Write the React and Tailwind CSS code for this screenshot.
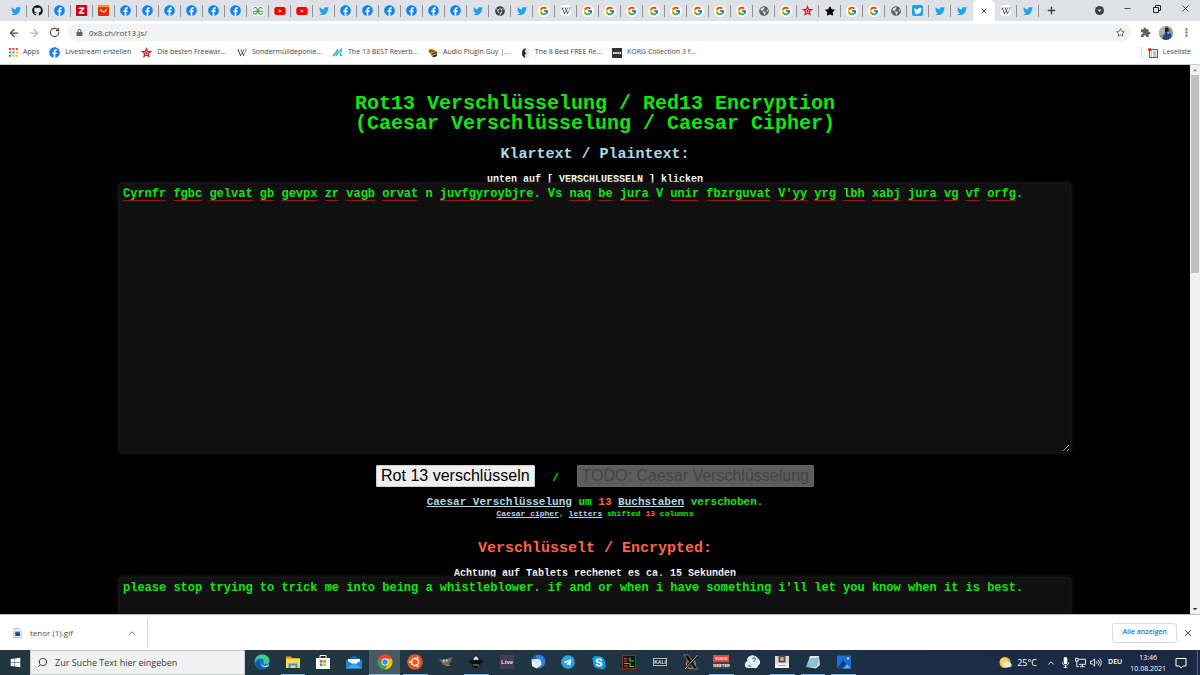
import React, { useState } from "react";
import {
  FaTwitter,
  FaFacebook,
  FaGithub,
  FaYoutube,
  FaWikipediaW,
  FaGlobeAmericas,
  FaStar,
  FaRegStar,
  FaChrome,
  FaLock,
  FaSkype,
  FaTelegram,
  FaUbuntu,
  FaWindows,
} from "react-icons/fa";
import { MdExtension } from "react-icons/md";
import { FcGoogle } from "react-icons/fc";
import {
  ArrowLeft,
  ArrowRight,
  RotateCw,
  X,
  Plus,
  Minus,
  ChevronUp,
  Search,
  MoreVertical,
} from "lucide-react";

/* ---------- tab icons ---------- */

const Twitter = () => <FaTwitter className="size-[10px] text-[#1da1f2]" />;
const Facebook = () => (
  <span className="flex size-[11px] items-center justify-center rounded-full bg-[radial-gradient(#fff_55%,transparent_56%)]">
    <FaFacebook className="size-[11px] text-[#1380f5]" />
  </span>
);
const Google = () => (
  <span className="flex size-[12px] items-center justify-center rounded-full bg-white">
    <FcGoogle className="size-[10px]" />
  </span>
);
const Youtube = () => <FaYoutube className="size-[12px] text-[#f00]" />;
const Globe = () => <FaGlobeAmericas className="size-[10px] text-[#5f6368]" />;
const Wiki = () => (
  <span className="flex size-[11px] items-center justify-center rounded-sm bg-white">
    <FaWikipediaW className="size-[10px] text-[#222]" />
  </span>
);
const Github = () => <FaGithub className="size-[11px] text-[#111]" />;
const ChromeDark = () => <FaChrome className="size-[10px] text-[#3c4043]" />;
const StarBlack = () => <FaStar className="size-[10px] text-black" />;

function Geeks() {
  return (
    <svg viewBox="0 0 14 12" className="h-[10px] w-[12px]" fill="none" stroke="#3f9b4f" strokeWidth="1.3">
      <rect width="14" height="12" rx="2" fill="#f4f7f4" stroke="none" />
      <path d="M1.500 3.300C3 .5 6.200 2 6.200 4.500V7.500C6.200 10.500 1.500 11 1.500 7.800M1 6.200h12M12.500 3.300C11 .5 7.800 2 7.800 4.500V7.500c0 3 4.700 3.500 4.700.3" />
    </svg>
  );
}
function ZIcon() {
  return (
    <svg viewBox="0 0 12 12" className="size-[11px]">
      <rect width="12" height="12" fill="#d0021b" />
      <path d="M3 2.600h6v1.600L5.200 7.800H9v1.700H3V7.900l3.800-3.600H3z" fill="#fff" />
    </svg>
  );
}
function AliIcon() {
  return (
    <svg viewBox="0 0 12 12" className="size-[11px]">
      <rect width="12" height="12" rx="1.500" fill="#e62e04" />
      <path d="M0 1.500A1.500 1.500 0 0 1 1.500 0h9A1.500 1.500 0 0 1 12 1.500V2.500H0z" fill="#f7971d" />
      <path d="M3 4.600c.3 3.600 5.700 3.600 6 0" fill="none" stroke="#fff" strokeWidth="1.100" strokeLinecap="round" />
    </svg>
  );
}
function StarRed() {
  return (
    <svg viewBox="0 0 24 24" className="size-[11px]">
      <path
        d="M12 3.500l2.500 6 6.500.500-5 4.300 1.600 6.300L12 17.200l-5.600 3.400 1.600-6.300L3 10l6.500-.5z"
        fill="#f3c4c7"
        stroke="#c8202f"
        strokeWidth="2.600"
      />
      <circle cx="12" cy="13" r="2" fill="#c8202f" />
    </svg>
  );
}
function TwitterBox() {
  return (
    <span className="flex size-[11px] items-center justify-center rounded-[2px] bg-[#1da1f2]">
      <FaTwitter className="size-[8px] text-white" />
    </span>
  );
}

const f = ["Facebook", Facebook];
const t = ["Twitter", Twitter];
const g = ["Google", Google];
const y = ["YouTube", Youtube];
const w = ["Wikipedia", Wiki];
const o = ["Website", Globe];
const tabs = [
  t, ["GitHub", Github], f, ["Zeitung", ZIcon], ["AliExpress", AliIcon],
  f, f, f, f, f, f, ["GeeksforGeeks", Geeks], y, y, t,
  f, f, f, f, f, f, t, ["Chrome", ChromeDark], t, g, w,
  g, g, g, g, g, g, g, g, o, g,
  ["Freeware", StarRed], ["Favorit", StarBlack], g, g, o,
  ["Tweet", TwitterBox], t, t, ["Rot13", null], w, t,
];

function TabStrip() {
  return (
    <header className="flex h-[21px] shrink-0 items-stretch bg-[#dee1e6] pl-[5px] text-[#3c4043]">
      <nav className="flex" aria-label="Tabs">
        {tabs.map(([name, Icon], i) =>
          Icon ? (
            <button key={i} aria-label={name} className="flex w-[22px] items-center">
              <span className="flex flex-1 justify-center">
                <Icon />
              </span>
              <span className={i === 43 ? "h-3 w-px" : "h-3 w-px bg-[#8e9196]"} />
            </button>
          ) : (
            <button
              key={i}
              aria-label="Tab schließen"
              className="flex w-[22px] items-center justify-center rounded-t-[5px] bg-white"
            >
              <X className="size-[8px]" strokeWidth={3} />
            </button>
          )
        )}
      </nav>
      <button aria-label="Neuer Tab" className="ml-[6px] flex w-3 items-center justify-center">
        <Plus className="size-[11px]" strokeWidth={3} />
      </button>
      <div className="ml-auto flex">
        <button aria-label="Tabs suchen" className="flex w-[27px] items-center justify-center">
          <svg viewBox="0 0 10 10" className="size-[9px]">
            <circle cx="5" cy="5" r="5" fill="#3c4043" />
            <path d="M2.800 4h4.400L5 6.800z" fill="#dee1e6" />
          </svg>
        </button>
        <button aria-label="Minimieren" className="flex w-[29px] items-center justify-center pb-1">
          <Minus className="size-[9px]" strokeWidth={2.500} />
        </button>
        <button aria-label="Verkleinern" className="flex w-[29px] items-center justify-center pb-1">
          <svg viewBox="0 0 8 8" className="size-[8px]" fill="none" stroke="#222">
            <path d="M.5 2.500h5v5h-5zM2.500 2.500v-2h5v5h-2" />
          </svg>
        </button>
        <button aria-label="Schließen" className="flex w-[29px] items-center justify-center pb-1">
          <X className="size-[11px]" />
        </button>
      </div>
    </header>
  );
}

function Toolbar() {
  return (
    <div className="flex h-[23px] shrink-0 items-center bg-white pr-2 pl-2 text-[#5f6368]">
      <button aria-label="Zurück" className="flex w-3 justify-center text-[#4a4d51]">
        <ArrowLeft className="size-[12px]" strokeWidth={2.500} />
      </button>
      <button aria-label="Vorwärts" className="ml-2 flex w-3 justify-center text-[#b4b7ba]">
        <ArrowRight className="size-[12px]" strokeWidth={2.500} />
      </button>
      <button aria-label="Neu laden" className="ml-2 flex w-3 justify-center text-[#4a4d51]">
        <RotateCw className="size-[11px]" strokeWidth={2.500} />
      </button>
      <div className="ml-2 flex h-[17px] flex-1 items-center rounded-full bg-[#f1f3f4] pr-1.5 pl-2">
        <FaLock className="size-[7px]" />
        <input
          aria-label="Adresse"
          defaultValue="0x8.ch/rot13.js/"
          className="ml-1.5 min-w-0 flex-1 bg-transparent font-['Open_Sans',sans-serif] text-[8px] text-[#4a4d51] outline-none"
        />
        <button aria-label="Lesezeichen">
          <FaRegStar className="size-[9px]" />
        </button>
      </div>
      <button aria-label="Erweiterungen" className="ml-[9px]">
        <MdExtension className="size-[11px]" />
      </button>
      <button aria-label="Profil" className="ml-[8px]">
        <svg viewBox="0 0 14 14" className="size-[14px]">
          <defs>
            <clipPath id="avatar">
              <circle cx="7" cy="7" r="7" />
            </clipPath>
          </defs>
          <g clipPath="url(#avatar)">
            <rect width="14" height="14" fill="#8b8d92" />
            <rect width="6" height="9" fill="#b5b2ad" />
            <path d="M3 14l2-6 3-2 4 2 1 6z" fill="#24468f" />
            <path d="M6 2l3-.5L10 5 8 8 6 6z" fill="#1c202c" />
            <path d="M8 7l1-2 1 3z" fill="#d6d9df" />
          </g>
        </svg>
      </button>
      <button aria-label="Menü" className="ml-[8px]">
        <MoreVertical className="size-[11px]" strokeWidth={3} />
      </button>
    </div>
  );
}

/* ---------- bookmarks ---------- */

function AppsIcon() {
  const c = ["#ea4335", "#ea4335", "#ea4335", "#34a853", "#4285f4", "#fbbc05", "#34a853", "#fbbc05", "#fbbc05"];
  return (
    <svg viewBox="0 0 9 9" className="size-[9px]">
      {c.map((fill, i) => (
        <rect key={i} x={(i % 3) * 3.4} y={Math.floor(i / 3) * 3.4} width="2" height="2" fill={fill} />
      ))}
    </svg>
  );
}
function ReverbIcon() {
  return (
    <svg viewBox="0 0 12 10" className="h-[9px] w-[11px]" fill="none" stroke="#28b5b5" strokeWidth="1.200">
      <path d="M.5 9C2 9 4 5 6.500 1L5 8c1.500-1 3-5 5.500-7L9 8.500l2.500-.8" />
      <path d="M1 7.500h3" strokeWidth="1.500" />
    </svg>
  );
}
function BeeIcon() {
  return (
    <svg viewBox="0 0 12 12" className="size-[10px]">
      <ellipse cx="4" cy="4" rx="3.500" ry="3" fill="#d98e12" />
      <ellipse cx="7.500" cy="7" rx="3.500" ry="4" fill="#3b2411" />
      <path d="M4 6l6-2M4.500 9l6-2" stroke="#f2b51d" strokeWidth="1.300" />
      <circle cx="3" cy="3.500" r="1" fill="#3b1608" />
    </svg>
  );
}
function MoonIcon() {
  return (
    <svg viewBox="0 0 12 12" className="size-[10px]">
      <rect x="6" y="1" width="5" height="10" fill="#e1e5e8" />
      <path d="M6 1C2 2 1.500 10 6 11.500 4.500 9 5 7.500 7 6.500 5 5 5 3 6.500 1z" fill="#222" stroke="#222" />
    </svg>
  );
}
function KorgIcon() {
  return (
    <svg viewBox="0 0 10 10" className="size-[10px]">
      <rect width="10" height="10" fill="#2d3337" />
      <path d="M1 4h1.500v2H1zM3.200 4h1.500v2H3.200zM5.400 4h1.500v2H5.400zM7.600 4H9v2H7.600z" fill="#fff" />
    </svg>
  );
}
const bookmarks = [
  ["Apps", AppsIcon],
  ["Livestream erstellen", Facebook],
  ["Die besten Freewar...", StarRed],
  ["Sondermülldeponie...", Wiki],
  ["The 13 BEST Reverb...", ReverbIcon],
  ["Audio Plugin Guy |...", BeeIcon],
  ["The 8 Best FREE Re...", MoonIcon],
  ["KORG Collection 3 f...", KorgIcon],
];

function Bookmarks() {
  return (
    <nav className="flex h-[21px] shrink-0 items-center gap-[10px] border-b border-[#c9cbce] bg-white pr-[9px] pb-[3px] pl-[9px] font-['Open_Sans',sans-serif] text-[7px] text-[#44474b]">
      {bookmarks.map(([label, Icon]) => (
        <a key={label} href="#" className="flex items-center gap-[5px] whitespace-nowrap">
          <Icon />
          {label}
        </a>
      ))}
      <a href="#" className="ml-auto flex items-center gap-[5px] border-l border-[#d5d7da] pl-[6px]">
        <svg viewBox="0 0 10 10" className="size-[10px]">
          <rect x="1.500" y="1.500" width="8" height="8" fill="none" stroke="#5f6368" />
          <path d="M3 4h1M5 4h3.500M3 6h1M5 6h3.500M3 8h1M5 8h3.500" stroke="#5f6368" strokeWidth=".8" />
          <circle cx="1.800" cy="1.800" r="1.800" fill="#d93025" />
        </svg>
        Leseliste
      </a>
    </nav>
  );
}

/* ---------- web page ---------- */

const cipher =
  "Cyrnfr fgbc gelvat gb gevpx zr vagb orvat n juvfgyroybjre. Vs naq be jura V unir fbzrguvat V'yy yrg lbh xabj jura vg vf orfg.";
const plain =
  "please stop trying to trick me into being a whistleblower. if and or when i have something i'll let you know when it is best.";

const rot13 = (s) =>
  s.replace(/[a-z]/gi, (c) => {
    const base = c <= "Z" ? 65 : 97;
    return String.fromCharCode(((c.charCodeAt(0) - base + 13) % 26) + base);
  });

/* Red spelling marks, one under each word longer than a letter. */
function SpellingMarks({ text }) {
  return (
    <div
      aria-hidden="true"
      className="pointer-events-none absolute inset-x-0 top-0 flex flex-wrap px-[4px] pt-[4px] text-[12px]"
    >
      {text.split(" ").map((word, i) => {
        const n = word.replace(/\.$/, "").length;
        const skip = n === 1 || word === "Vs";
        return (
          <span key={i} className="flex h-[14px]" style={{ width: `${word.length + 1}ch` }}>
            <span
              className={skip ? "" : "border-b border-[#9a1212]"}
              style={{ width: `${n}ch` }}
            />
          </span>
        );
      })}
    </div>
  );
}

const area =
  "block h-[270px] w-full resize-y rounded-[2px] border border-[#161616] bg-[#101010] px-[3px] pt-[3px] text-[12px] leading-[14px] font-bold text-[#0ee60e] shadow-[0_0_4px_#222] outline-none";

function Page() {
  const [input, setInput] = useState(cipher);
  const [output, setOutput] = useState(plain);
  return (
    <main className="min-h-0 flex-1 overflow-hidden bg-black pt-[29px] text-center font-['Liberation_Mono',monospace] font-bold text-[#0ee60e]">
      <h1 className="text-[20px] leading-[20px]">
        Rot13 Verschlüsselung / Red13 Encryption
        <br />
        (Caesar Verschlüsselung / Caesar Cipher)
      </h1>
      <h2 className="mt-[11px] text-[15px] leading-[20px] text-[#add8e6]">
        <label htmlFor="input">Klartext / Plaintext:</label>
      </h2>
      <p className="mt-[9px] h-[9px] text-[10px] leading-[12px] text-white">
        unten auf [ VERSCHLUESSELN ] klicken
      </p>
      <div className="relative mx-auto w-4/5">
        <textarea
          id="input"
          spellCheck={false}
          value={input}
          onChange={(e) => setInput(e.target.value)}
          className={area}
        />
        <SpellingMarks text={input} />
      </div>
      <div className="mt-[12px] flex items-center justify-center font-['Liberation_Sans',sans-serif] text-[16px] leading-[20px] font-normal">
        <button
          onClick={() => setOutput(rot13(input))}
          className="rounded-[1px] border border-[#d0d0d0] bg-[#efefef] px-[4px] text-black"
        >
          Rot 13 verschlüsseln
        </button>
        <span className="w-[42px] pt-1 font-['Liberation_Mono',monospace] text-[11px] leading-[16px] font-bold">
          /
        </span>
        <button disabled className="rounded-[1px] border border-[#666] bg-[#5d5d5d] px-[4px] text-[#444]">
          TODO: Caesar Verschlüsselung
        </button>
      </div>
      <p className="mt-[8px] text-[11px] leading-[14px]">
        <a href="#" className="text-[#add8e6] underline">Caesar Verschlüsselung</a> um{" "}
        <span className="text-[#ff6347]">13</span>{" "}
        <a href="#" className="text-[#add8e6] underline">Buchstaben</a> verschoben.
      </p>
      <p className="text-[8px] leading-[10px]">
        <a href="#" className="text-[#add8e6] underline">Caesar cipher</a>,{" "}
        <a href="#" className="text-[#add8e6] underline">letters</a> shifted{" "}
        <span className="text-[#ff6347]">13</span> columns
      </p>
      <h2 className="mt-[20px] text-[15px] leading-[20px] text-[#ff6347]">
        <label htmlFor="output">Verschlüsselt / Encrypted:</label>
      </h2>
      <p className="mt-[9px] h-[9px] text-[10px] leading-[12px] text-white">
        Achtung auf Tablets rechenet es ca. 15 Sekunden
      </p>
      <div className="relative mx-auto w-4/5">
        <textarea
          id="output"
          spellCheck={false}
          value={output}
          onChange={(e) => setOutput(e.target.value)}
          className={area}
        />
      </div>
    </main>
  );
}

function ScrollBar() {
  return (
    <div className="flex w-[10px] flex-col items-center bg-[#f1f1f1]">
      <svg viewBox="0 0 10 10" className="size-[10px]">
        <path d="M2.800 6.200h4.400L5 4z" fill="#8b8b8b" />
      </svg>
      <div className="h-[198px] w-[8px] bg-[#c1c1c1]" />
      <svg viewBox="0 0 10 10" className="mt-auto size-[10px]">
        <path d="M2.800 4h4.400L5 6.200z" fill="#333" />
      </svg>
    </div>
  );
}

/* ---------- download shelf ---------- */

function Downloads() {
  return (
    <div className="flex h-[36px] shrink-0 items-center border-t border-[#b8babd] bg-white pr-[7px] font-['Open_Sans',sans-serif] text-[8px] text-[#4a4d51]">
      <div className="flex h-[28px] w-[148px] items-center border-r border-[#d5d7da] pr-[10px] pl-[13px]">
        <svg viewBox="0 0 9 11" className="h-[10px] w-[9px]">
          <path d="M.5.5H6L8.500 3v7.500h-8z" fill="#eaf2fa" stroke="#9aa9b8" strokeWidth=".8" />
          <rect x="2" y="4" width="5" height="4.500" fill="#1f5fa8" />
          <path d="M2 8.500l2-2.500 1.500 1 1.500-1.500v3z" fill="#12355f" />
        </svg>
        <span className="ml-2">tenor (1).gif</span>
        <button aria-label="Download-Menü" className="ml-auto">
          <ChevronUp className="size-[10px]" />
        </button>
      </div>
      <button className="ml-auto h-5 rounded-[3px] border border-[#dadce0] px-[9px] text-[7px] font-semibold text-[#2f6fe0]">
        Alle anzeigen
      </button>
      <button aria-label="Leiste schließen" className="ml-[6px]">
        <X className="size-[10px]" strokeWidth={2.5} />
      </button>
    </div>
  );
}

/* ---------- taskbar ---------- */

const I = ({ children }) => (
  <svg viewBox="0 0 16 16" className="size-[16px]">
    {children}
  </svg>
);

const apps = [
  ["Edge", false, () => (
    <I>
      <circle cx="8" cy="8" r="7.500" fill="#1578c8" />
      <path d="M.6 8C1 3.500 4.200.5 8 .5c4.500 0 7.500 3 7.500 6 0 2.500-2 3.500-4 3.500-1.500 0-2.300-.7-1.800-1.400C10.800 6.500 9 4.500 6.500 4.500 3.500 4.500 1.500 6 .6 8z" fill="#3ecf8e" />
      <path d="M.6 8C1 4.500 3.500 2 7 2c-3 1.500-3 4-6.400 6z" fill="#35b6dd" />
      <path d="M5.500 8.500c-.5 3 2 5.500 5.500 5.300-4 2.500-9 .5-9-4 0-2.500 2.500-4.500 5.200-4.300C6 6 5.600 7.300 5.500 8.500z" fill="#0c59a4" />
      <path d="M6.500 8.500c0 2.500 3 4.200 7 2.800l1.500-1.300-.5 2.200c-4 2-8 .3-8-3.700z" fill="#bfe6f7" />
    </I>
  )],
  ["Explorer", true, () => (
    <I>
      <path d="M1 2.500h5l1.500 1.500H15v3H1z" fill="#e8a317" />
      <path d="M1 5h14v9H1z" fill="#fbd768" />
      <path d="M3.500 9.500h9V14h-2v-2.500h-5V14h-2z" fill="#3b97d8" />
    </I>
  )],
  ["Store", false, () => (
    <I>
      <path d="M5 4V1.500h6V4" fill="none" stroke="#fff" />
      <path d="M1 4h14v11H1z" fill="#fff" />
      <path d="M4.800 6h2.700v2.700H4.800z" fill="#f25022" />
      <path d="M8.300 6H11v2.700H8.300z" fill="#7fba00" />
      <path d="M4.800 9.500h2.700v2.700H4.800z" fill="#00a4ef" />
      <path d="M8.300 9.500H11v2.700H8.300z" fill="#ffb900" />
    </I>
  )],
  ["Mail", false, () => (
    <I>
      <path d="M0 6l8-4.500L16 6v8.500H0z" fill="#1066b5" />
      <path d="M2 5h12v5H2z" fill="#f4f8fb" />
      <path d="M0 6l8 5-8 3.500zM16 6l-8 5 8 3.500z" fill="#1d86d8" />
      <path d="M0 14.500L8 9l8 5.500z" fill="#3aa9ee" />
    </I>
  )],
  ["Chrome", true, () => (
    <I>
      <circle cx="8" cy="8" r="7.500" fill="#34a853" />
      <path d="M8 4.500h6.600A7.500 7.500 0 0 1 8 15.500l3-5.700z" fill="#fbbc05" />
      <path d="M8 8L4.900 9.850 1.500 4.250A7.500 7.500 0 0 1 14.600 4.500H8z" fill="#ea4335" />
      <circle cx="8" cy="8" r="3.500" fill="#fff" />
      <circle cx="8" cy="8" r="2.700" fill="#4285f4" />
    </I>
  )],
  ["Ubuntu", true, () => (
    <span className="flex size-[16px] items-center justify-center rounded-full bg-[radial-gradient(#fff_55%,transparent_56%)]">
      <FaUbuntu className="size-[16px] text-[#e95420]" />
    </span>
  )],
  ["GIMP", false, () => (
    <I>
      <path d="M1 5l4 1 6-2 3-1-1 6-3 3-5-1-2-3z" fill="#6f6858" />
      <circle cx="6" cy="7" r="1.400" fill="#eee" />
      <circle cx="9" cy="6.800" r="1.200" fill="#eee" />
      <circle cx="6.200" cy="7.100" r=".7" fill="#111" />
      <circle cx="9.200" cy="6.900" r=".6" fill="#111" />
      <path d="M7 10l6 1.500-4 .5z" fill="#b98e4a" />
      <path d="M12 8l3 2-1 1-3-2z" fill="#2c2a26" />
    </I>
  )],
  ["Inkscape", true, () => (
    <I>
      <path d="M8 1l6.500 6.500c.8 1-.5 1.800-2.500 2l1 1.500-3 .8L8 15l-2-2-2.500-1 1.500-2C2.500 9.500.8 8.800 1.500 7.500z" fill="#0b0b0c" />
      <path d="M8 2l3 3.200-1.600 1L8 5.200 6.800 6.500 5 5z" fill="#e4e6e8" />
      <path d="M5 11h6" stroke="#d3d6d8" strokeWidth=".7" />
    </I>
  )],
  ["Ableton Live", false, () => (
    <span className="flex size-[14px] items-center justify-center bg-[#453e50] font-['Liberation_Sans',sans-serif] text-[6px] font-bold text-[#e4dff0]">
      Live
    </span>
  )],
  ["Thunderbird", false, () => (
    <I>
      <circle cx="8.500" cy="7.500" r="7" fill="#1b5fc4" />
      <path d="M1.500 5.500l8.500-1 2.500 6-6 4-4.500-2.500z" fill="#edf2f8" />
      <path d="M1.500 5.500l6 3.500 3-4.500" fill="none" stroke="#b4c9e6" strokeWidth=".8" />
      <path d="M6 1.500c5-2 9.500 2 9 6.500C14.500 12 11 14.500 8 14.500c3-2 4-4 3-7.500-1-2.500-3-3-5-2z" fill="#2f7fe0" />
    </I>
  )],
  ["Telegram", false, () => (
    <span className="flex size-[14px] items-center justify-center rounded-full bg-[radial-gradient(#fff_55%,transparent_56%)]">
      <FaTelegram className="size-[14px] text-[#2ca5e0]" />
    </span>
  )],
  ["Skype", false, () => (
    <span className="flex size-[14px] items-center justify-center rounded-full bg-[radial-gradient(#fff_55%,transparent_56%)]">
      <FaSkype className="size-[15px] text-[#00a5ea]" />
    </span>
  )],
  ["Monitor", false, () => (
    <I>
      <rect x="1.500" y="1.500" width="13" height="13" fill="#141414" stroke="#8b2a22" />
      <path d="M3 4.500h3M3 7h3M3 12h4" stroke="#e04b3c" strokeWidth="1.200" />
      <path d="M9 3.500v3.500h4M9 9v3.500h4M3 9.500h5" fill="none" stroke="#3fc24c" strokeWidth="1.200" />
    </I>
  )],
  ["Kali", false, () => (
    <span className="flex h-[8px] w-[14px] items-center justify-center border border-[#b9bfc6] bg-[#1b2227] font-['Liberation_Sans',sans-serif] text-[5px] leading-none font-bold text-[#e4e7ea]">
      KALI
    </span>
  )],
  ["XServer", false, () => (
    <I>
      <circle cx="8" cy="10" r="4.500" fill="none" stroke="#d5702b" strokeWidth="1.300" />
      <path d="M1 1h4l10 14h-4z" fill="#0c0c0c" stroke="#c5c5c5" strokeWidth=".5" />
      <path d="M14.500 1L2 15" stroke="#111" strokeWidth="2.200" />
      <path d="M14.500 1L2 15" stroke="#ddd" strokeWidth=".8" />
    </I>
  )],
  ["Voicemeeter", true, () => (
    <span className="flex w-[16px] flex-col items-center font-['Liberation_Sans',sans-serif] text-[4px] leading-[7px] font-bold text-white">
      <span className="w-full bg-[#e8453c]">VOICE</span>
      <span className="w-full bg-[#3a434b]">MEETER</span>
    </span>
  )],
  ["Cloud", false, () => (
    <I>
      <path d="M4 14a3.500 3.500 0 0 1-.8-6.800A5 5 0 0 1 12.500 4 4 4 0 0 1 14 11.500c0 2-2 3-4 2.500z" fill="#e9f5f9" />
      <circle cx="9.500" cy="6.500" r="4.500" fill="#fff" stroke="#a8d8e3" strokeWidth=".8" />
      <path d="M8 5l2-1.500 1.500 1.500-2 3M4 11l3 2" fill="none" stroke="#258ea8" strokeWidth="1.200" />
    </I>
  )],
  ["Drucker", true, () => (
    <I>
      <path d="M1 2h14v12H1z" fill="#d9d8d6" />
      <path d="M4.500 1.500h7v7h-7z" fill="#5b4a49" />
      <circle cx="8" cy="5" r="2" fill="#b5aea9" />
      <path d="M1 9.500h14V14H1z" fill="#f3f2f0" />
      <path d="M4 11.500h8" stroke="#aaa" />
    </I>
  )],
  ["Notepad", true, () => (
    <I>
      <path d="M5 2h9l-3 11H1z" fill="#7fc4d8" />
      <path d="M5 2h9l-.6 2H4.300z" fill="#dfe9ec" />
      <path d="M14 2l1 9-4 3.500L1.500 13H11z" fill="#d4dcdc" />
      <path d="M4 6h7M3.200 8.500h7" stroke="#94d0e0" strokeWidth=".8" />
    </I>
  )],
  ["Fotos", true, () => (
    <I>
      <rect x="1" y="1.500" width="14" height="13" fill="#1a70d0" />
      <path d="M1 14.500l6-8 8 8z" fill="#0b3f91" />
      <path d="M7 14.500l4-4.500 4 4.500z" fill="#59b0f5" />
      <circle cx="12" cy="4.500" r="1.100" fill="#e9f4ff" />
    </I>
  )],
];

function Taskbar() {
  return (
    <footer className="flex h-[25px] shrink-0 items-stretch bg-linear-to-r from-[#21363e] via-[#203644] to-[#1a2745] font-['Open_Sans',sans-serif] text-white">
      <button aria-label="Start" className="flex w-[30px] items-center justify-center">
        <FaWindows className="size-[11px]" />
      </button>
      <label className="flex w-[215px] items-center border border-[#c9cccd] bg-[#f1f1f1] pl-[6px] text-[#333]">
        <Search className="size-[11px] -scale-x-100" />
        <input
          aria-label="Suche"
          placeholder="Zur Suche Text hier eingeben"
          className="ml-[7px] min-w-0 flex-1 bg-transparent text-[9px] outline-none placeholder:text-[#3a3a3a]"
        />
      </label>
      <nav className="ml-[2px] grid w-[612px] grid-cols-20" aria-label="Programme">
        {apps.map(([name, open, Icon]) => (
          <button
            key={name}
            aria-label={name}
            className={
              name === "Chrome"
                ? "flex items-center justify-center border-b border-[#76b9ed] bg-[#4a5a63]"
                : open
                  ? "mx-[3px] flex items-center justify-center border-b border-[#76b9ed]"
                  : "mx-[3px] flex items-center justify-center border-b border-transparent"
            }
          >
            <Icon />
          </button>
        ))}
      </nav>
      <div className="ml-auto flex items-center text-[8px]">
        <svg viewBox="0 0 14 14" className="size-[13px]">
          <circle cx="6.500" cy="7" r="6" fill="#fdb827" />
          <circle cx="5.500" cy="6" r="4" fill="#ffd55c" />
          <path d="M6 12a2.200 2.200 0 0 1 0-4.400 3 3 0 0 1 5.500 0A2.200 2.200 0 0 1 11.500 12z" fill="#dcebf8" />
        </svg>
        <span className="ml-[5px] text-[9px]">25°C</span>
        <ChevronUp className="ml-[9px] size-[10px]" />
        <svg viewBox="0 0 10 12" className="ml-[5px] h-[11px] w-[9px]">
          <rect x="3" y="0" width="4" height="8" rx="1.800" fill="#fff" />
          <path d="M1.500 6c.5 4.500 6.500 4.500 7 0M5 9v2.500M3 11.500h4" fill="none" stroke="#fff" />
        </svg>
        <svg viewBox="0 0 12 12" className="ml-[5px] size-[11px]" fill="none" stroke="#fff">
          <path d="M4.500 2.500h7v5.500h-7M8 8v2.500M5.500 10.500h5M.5 1.500h3v3h-3zM2 4.500v6h2" />
        </svg>
        <svg viewBox="0 0 13 12" className="ml-[4px] h-[11px] w-[12px]" fill="none" stroke="#fff">
          <path d="M.5 4.500h2L5 2v8L2.500 7.500h-2zM7 4.500c.8 1 .8 2 0 3M8.800 3c1.600 2 1.600 4 0 6M10.500 1.500c2.300 3 2.300 6 0 9" />
        </svg>
        <span className="ml-[6px] text-[7px] font-semibold">DEU</span>
        <div className="ml-[8px] text-center text-[7px] leading-[11px]">
          13:46
          <br />
          10.08.2021
        </div>
        <button aria-label="Benachrichtigungen" className="mr-[10px] ml-[9px]">
          <svg viewBox="0 0 12 12" className="size-[12px]" fill="none" stroke="#fff">
            <path d="M1 1.500h10v7.500H8L6 11 4.500 9H1z" />
          </svg>
        </button>
        <span className="mr-[2px] h-[25px] w-px bg-[#56617a]" />
      </div>
    </footer>
  );
}

export default function App() {
  return (
    <div className="flex h-screen flex-col overflow-hidden">
      <TabStrip />
      <Toolbar />
      <Bookmarks />
      <div className="flex min-h-0 flex-1">
        <Page />
        <ScrollBar />
      </div>
      <Downloads />
      <Taskbar />
    </div>
  );
}
